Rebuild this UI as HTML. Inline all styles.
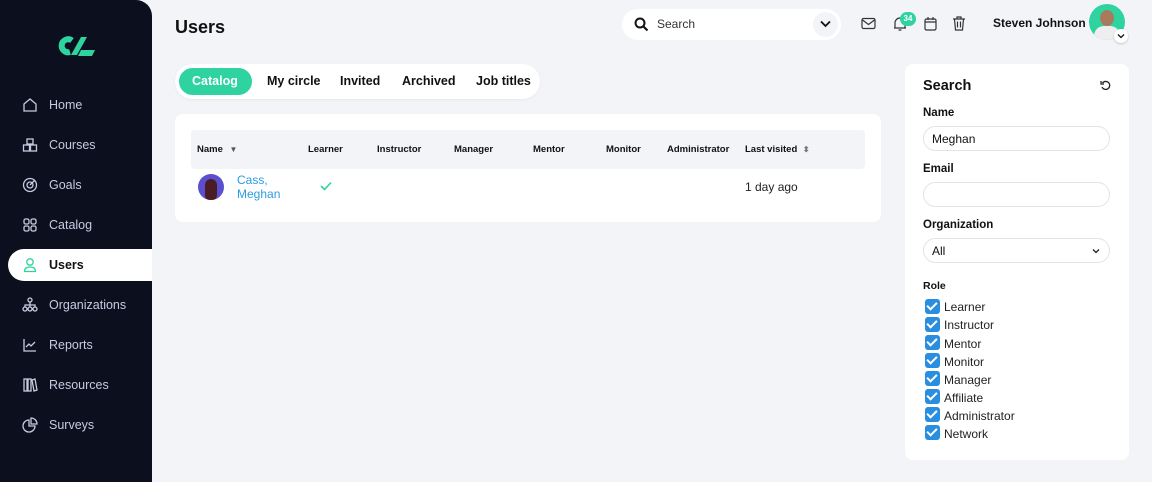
<!DOCTYPE html>
<html><head><meta charset="utf-8"><style>
*{box-sizing:border-box;margin:0;padding:0}
body{width:1152px;height:482px;overflow:hidden;background:#f3f4f8;font-family:"Liberation Sans",sans-serif;color:#111;position:relative}
.sb{position:absolute;left:0;top:0;width:152px;height:482px;background:#0b0f1e;border-top-right-radius:16px}
.nav{position:absolute;left:0;width:152px;height:32px;display:flex;align-items:center;color:#c7cbe0;font-size:12.5px}
.nav svg{position:absolute;left:22px;width:16px;height:16px;fill:none;stroke:#c7cbe0;stroke-width:1.3}
.nav span{position:absolute;left:49px}
.nav.act{left:8px;width:144px;background:#fff;border-radius:16px 0 0 16px;color:#111;font-weight:bold}
.nav.act svg{left:14px;stroke:#2ed3a0}
.nav.act span{left:41px}
h1{position:absolute;left:175px;top:17px;font-size:18px;font-weight:bold}
.srch{position:absolute;left:622px;top:9px;width:219px;height:31px;background:#fff;border-radius:16px}
.tabs{position:absolute;left:175px;top:64px;width:365px;height:35px;background:#fff;border-radius:18px;box-shadow:0 1px 3px rgba(0,0,0,.05)}
.tab{position:absolute;top:17px;font-size:12.5px;font-weight:bold;transform:translateY(-50%)}
.card{position:absolute;left:175px;top:114px;width:706px;height:108px;background:#fff;border-radius:8px}
.th{position:absolute;left:16px;top:16px;width:674px;height:39px;background:#f3f4f8;border-radius:4px}
.h{position:absolute;top:14px;font-size:9.5px;font-weight:bold}
.panel{position:absolute;left:905px;top:64px;width:224px;height:396px;background:#fff;border-radius:8px}
.lbl{position:absolute;left:18px;font-size:11.5px;font-weight:bold}
.inp{position:absolute;left:18px;width:187px;height:25px;border:1px solid #e2e4ec;border-radius:13px;font-size:12px;padding:5px 8px}
.cb{position:absolute;left:20px;width:15px;height:15px;background:#2a8ee0;border-radius:3px}
.cb::after{content:"";position:absolute;left:4px;top:1px;width:4px;height:8px;border:solid #fff;border-width:0 2px 2px 0;transform:rotate(45deg)}
.cbl{position:absolute;left:39px;font-size:12px;color:#222}
</style></head><body>
<div class="sb">
<svg style="position:absolute;left:56px;top:33px" width="40" height="26" viewBox="0 0 40 26"><path d="M16 7.5 A6.5 6.5 0 1 0 14 19" fill="none" stroke="#2ed3a0" stroke-width="6"/><path d="M15 22 L25 4 L31 4 L21 22Z" fill="#2ed3a0"/><path d="M25 17 L39 17 L36 23 L22 23Z" fill="#2ed3a0"/></svg>
<div class="nav" style="top:89px"><svg viewBox="0 0 16 16"><path d="M2 7 L8 2 L14 7 V14 H2Z"/></svg><span>Home</span></div>
<div class="nav" style="top:129px"><svg viewBox="0 0 16 16"><rect x="5" y="2" width="6" height="5"/><rect x="1.5" y="8" width="6" height="6"/><rect x="8.5" y="8" width="6" height="6"/></svg><span>Courses</span></div>
<div class="nav" style="top:169px"><svg viewBox="0 0 16 16"><circle cx="8" cy="8" r="6.5"/><circle cx="8" cy="8" r="3"/><path d="M8 8 L13 3"/></svg><span>Goals</span></div>
<div class="nav" style="top:209px"><svg viewBox="0 0 16 16"><rect x="2" y="2" width="5" height="5" rx="1.5"/><rect x="9" y="2" width="5" height="5" rx="1.5"/><rect x="2" y="9" width="5" height="5" rx="1.5"/><rect x="9" y="9" width="5" height="5" rx="1.5"/></svg><span>Catalog</span></div>
<div class="nav act" style="top:249px"><svg viewBox="0 0 16 16"><circle cx="8" cy="5" r="3.2"/><path d="M2.5 14.5 Q2.5 10 8 10 Q13.5 10 13.5 14.5Z"/></svg><span>Users</span></div>
<div class="nav" style="top:289px"><svg viewBox="0 0 16 16"><circle cx="8" cy="3" r="2"/><circle cx="3" cy="12" r="2"/><circle cx="8" cy="12" r="2"/><circle cx="13" cy="12" r="2"/><path d="M8 5V10M3 10V8H13V10"/></svg><span>Organizations</span></div>
<div class="nav" style="top:329px"><svg viewBox="0 0 16 16"><path d="M2 2V14H14M4 10L7 7L9 9L13 5"/></svg><span>Reports</span></div>
<div class="nav" style="top:369px"><svg viewBox="0 0 16 16"><rect x="2" y="2" width="3" height="12"/><rect x="6" y="2" width="3" height="12"/><path d="M10 3L13 2L15 13L12 14Z"/></svg><span>Resources</span></div>
<div class="nav" style="top:409px"><svg viewBox="0 0 16 16"><path d="M7 3A6 6 0 1 0 13 9H7Z"/><path d="M9 1V7H15A6 6 0 0 0 9 1Z"/></svg><span>Surveys</span></div>
</div>
<h1>Users</h1>
<div class="srch">
<svg style="position:absolute;left:12px;top:8px" width="15" height="15" viewBox="0 0 15 15"><circle cx="6" cy="6" r="4.5" fill="none" stroke="#111" stroke-width="2"/><path d="M9.5 9.5L13.5 13.5" stroke="#111" stroke-width="2"/></svg>
<span style="position:absolute;left:35px;top:8px;font-size:12px;color:#333">Search</span>
<div style="position:absolute;right:3px;top:3px;width:25px;height:25px;border-radius:50%;background:#f3f4f8"></div>
<svg style="position:absolute;right:10px;top:11px" width="11" height="8" viewBox="0 0 11 8"><path d="M1 1.5L5.5 6L10 1.5" fill="none" stroke="#111" stroke-width="1.8"/></svg>
</div>
<svg style="position:absolute;left:861px;top:17px" width="15" height="13" viewBox="0 0 15 13"><rect x="1" y="1.5" width="13" height="10" rx="1.5" fill="none" stroke="#333" stroke-width="1.2"/><path d="M1.5 3L7.5 7.5L13.5 3" fill="none" stroke="#333" stroke-width="1.2"/></svg>
<svg style="position:absolute;left:893px;top:16px" width="14" height="16" viewBox="0 0 14 16"><path d="M2 12V7A5 5 0 0 1 12 7V12H1H13M5.5 14H8.5" fill="none" stroke="#333" stroke-width="1.2"/></svg>
<div style="position:absolute;left:900px;top:12px;width:16px;height:14px;border-radius:7px;background:#2ed3a0;color:#fff;font-size:8px;font-weight:bold;text-align:center;line-height:14px">34</div>
<svg style="position:absolute;left:923px;top:16px" width="15" height="15" viewBox="0 0 15 15"><rect x="2" y="3" width="11" height="11" rx="1.5" fill="none" stroke="#333" stroke-width="1.2"/><path d="M2 6H13M5 1V4M10 1V4" stroke="#333" stroke-width="1.2"/></svg>
<svg style="position:absolute;left:952px;top:16px" width="14" height="15" viewBox="0 0 14 15"><path d="M1 3H13M5 3V1H9V3M2.5 3L3.5 14H10.5L11.5 3M5.5 5.5V11.5M8.5 5.5V11.5" fill="none" stroke="#333" stroke-width="1.2"/></svg>
<div style="position:absolute;left:993px;top:16px;font-size:12px;font-weight:bold">Steven Johnson</div>
<div style="position:absolute;left:1089px;top:4px;width:36px;height:36px;border-radius:50%;background:#2ed3a0;overflow:hidden"><div style="position:absolute;left:11px;top:6px;width:14px;height:16px;border-radius:50%;background:#a97a5e"></div><div style="position:absolute;left:5px;top:22px;width:26px;height:16px;border-radius:10px 10px 0 0;background:#eee"></div></div>
<div style="position:absolute;left:1114px;top:29px;width:14px;height:14px;border-radius:50%;background:#fff;box-shadow:0 1px 2px rgba(0,0,0,.2)"></div>
<svg style="position:absolute;left:1117px;top:33px" width="8" height="6" viewBox="0 0 8 6"><path d="M1 1.5L4 4.5L7 1.5" fill="none" stroke="#111" stroke-width="1.3"/></svg>

<div class="tabs">
<div style="position:absolute;left:4px;top:4px;width:73px;height:27px;background:#2ed3a0;border-radius:14px"></div>
<div class="tab" style="left:17px;color:#fff">Catalog</div>
<div class="tab" style="left:92px">My circle</div>
<div class="tab" style="left:165px">Invited</div>
<div class="tab" style="left:227px">Archived</div>
<div class="tab" style="left:301px">Job titles</div>
</div>

<div class="card">
<div class="th">
<div class="h" style="left:6px">Name <span style="font-size:8px;color:#555;margin-left:4px">▼</span></div>
<div class="h" style="left:117px">Learner</div>
<div class="h" style="left:186px">Instructor</div>
<div class="h" style="left:263px">Manager</div>
<div class="h" style="left:342px">Mentor</div>
<div class="h" style="left:415px">Monitor</div>
<div class="h" style="left:476px">Administrator</div>
<div class="h" style="left:554px">Last visited <span style="font-size:8px;color:#777;margin-left:3px">⬍</span></div>
</div>
<div style="position:absolute;left:23px;top:60px;width:26px;height:26px;border-radius:50%;background:#5b4fd0;overflow:hidden"><div style="position:absolute;left:7px;top:5px;width:12px;height:22px;border-radius:6px;background:#4a1c24"></div></div>
<div style="position:absolute;left:62px;top:59px;font-size:12px;color:#2a9de0;line-height:14px">Cass,<br>Meghan</div>
<svg style="position:absolute;left:145px;top:67px" width="12" height="10" viewBox="0 0 12 10"><path d="M1 5L4.5 8.5L11 1.5" fill="none" stroke="#2ed3a0" stroke-width="1.6"/></svg>
<div style="position:absolute;left:570px;top:66px;font-size:12px;color:#222">1 day ago</div>
</div>

<div class="panel">
<div style="position:absolute;left:18px;top:14px;font-size:14.5px;font-weight:bold">Search</div>
<svg style="position:absolute;left:195px;top:16px" width="11" height="11" viewBox="0 0 11 11"><path d="M2.5 3A4 4 0 1 1 2 7" fill="none" stroke="#222" stroke-width="1.3"/><path d="M1 1V4H4" fill="none" stroke="#222" stroke-width="1.3"/></svg>
<div class="lbl" style="top:43px">Name</div>
<div class="inp" style="top:62px">Meghan</div>
<div class="lbl" style="top:99px">Email</div>
<div class="inp" style="top:118px"></div>
<div class="lbl" style="top:155px">Organization</div>
<div class="inp" style="top:174px">All<svg style="position:absolute;right:9px;top:9px" width="8" height="6" viewBox="0 0 8 6"><path d="M1 1.5L4 4.5L7 1.5" fill="none" stroke="#222" stroke-width="1.3"/></svg></div>
<div class="lbl" style="top:216px;font-size:10.5px">Role</div>
<div class="cb" style="top:235px"></div><div class="cbl" style="top:236px">Learner</div>
<div class="cb" style="top:253px"></div><div class="cbl" style="top:254px">Instructor</div>
<div class="cb" style="top:271px"></div><div class="cbl" style="top:273px">Mentor</div>
<div class="cb" style="top:289px"></div><div class="cbl" style="top:291px">Monitor</div>
<div class="cb" style="top:307px"></div><div class="cbl" style="top:309px">Manager</div>
<div class="cb" style="top:325px"></div><div class="cbl" style="top:327px">Affiliate</div>
<div class="cb" style="top:343px"></div><div class="cbl" style="top:345px">Administrator</div>
<div class="cb" style="top:361px"></div><div class="cbl" style="top:363px">Network</div>
</div>
</body></html>
